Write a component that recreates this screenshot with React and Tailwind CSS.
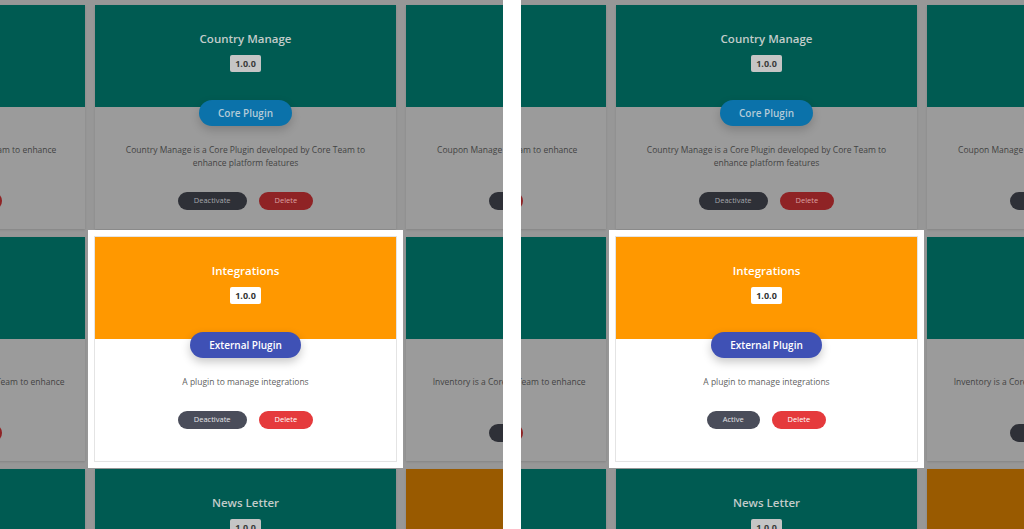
import React from 'react';

// plugin rows as laid out in the admin grid (3 columns, first and last cut by the viewport)
const ROWS = [
    [
        { name: 'Location Manage', type: 'core', desc: 'Location is a Core Plugin developed by Core Team to enhance platform features' },
        { name: 'Country Manage', type: 'core', desc: 'Country Manage is a Core Plugin developed by Core Team to enhance platform features' },
        { name: 'Coupon Manage', type: 'core', desc: 'Coupon Manage is a Core Plugin developed by Core Team to enhance platform features' },
    ],
    [
        { name: 'Notifications', type: 'core', desc: 'Notifications is a Core Plugin developed by Core Team to enhance platform features' },
        { name: 'Integrations', type: 'external', desc: 'A plugin to manage integrations', focus: true },
        { name: 'Inventory', type: 'core', desc: 'Inventory is a Core Plugin developed by Core Team to enhance platform features' },
    ],
    [
        { name: 'Order Manage', type: 'core', desc: 'Order Manage is a Core Plugin developed by Core Team to enhance platform features' },
        { name: 'News Letter', type: 'core', desc: 'News Letter is a Core Plugin developed by Core Team to enhance platform features' },
        { name: 'Payments', type: 'external', desc: 'A plugin to manage payments' },
    ],
];

function PluginCard({ plugin, activeLabel }) {
    const lit = !!plugin.focus;
    const external = plugin.type === 'external';

    const header = external
        ? (lit ? 'bg-[#ff9800]' : 'bg-[#995a00]')
        : (lit ? 'bg-[#009688]' : 'bg-[#005b52]');

    return (
        <article
            className={`flex flex-col ${lit
                ? 'relative z-10 bg-white shadow-[0_0_0_1px_#e4e4e4,0_0_0_7px_#ffffff]'
                : 'bg-[#9b9b9b] shadow-[0_1px_2px_rgba(0,0,0,0.12)]'}`}
        >
            <div className={`h-[102px] shrink-0 flex flex-col items-center pt-[26px] ${header}`}>
                <h3 className={`text-[11.5px] leading-[15px] font-semibold ${lit ? 'text-white' : 'text-[#c3ccca]'}`}>
                    {plugin.name}
                </h3>
                <span className={`mt-[9px] h-[17px] px-[5px] rounded-[2px] flex items-center text-[9px] font-bold ${lit ? 'bg-white text-[#333]' : 'bg-[#c5c5c5] text-[#3a3a3a]'}`}>
                    1.0.0
                </span>
            </div>

            <div className="flex flex-col items-center px-[14px] pb-[19px] flex-1">
                <span
                    className={`-mt-[7px] h-[26px] rounded-full flex items-center px-[19px] text-[10px] font-semibold ${external
                        ? (lit ? 'bg-[#3f51b5] text-white shadow-[0_4px_10px_rgba(0,0,0,0.22)]' : 'bg-[#26316d] text-[#9aa0c4]')
                        : (lit ? 'bg-[#03a9f4] text-white' : 'bg-[#0b72aa] text-[#b3cbd8] shadow-[0_4px_10px_rgba(0,0,0,0.18)]')}`}
                >
                    {external ? 'External Plugin' : 'Core Plugin'}
                </span>

                <p className={`mt-[17px] text-center text-[8.5px] leading-[13px] ${lit ? 'text-[#5f5f5f]' : 'text-[#434343]'}`}>
                    {plugin.desc}
                </p>

                <div className="mt-[23px] flex gap-[12px]">
                    <button className={`h-[18px] px-[16px] rounded-full text-[7.5px] ${lit ? 'bg-[#4a4d5a] text-[#e4e4e8]' : 'bg-[#2e3037] text-[#a4a6ab]'}`}>
                        {lit && activeLabel ? activeLabel : 'Deactivate'}
                    </button>
                    <button className={`h-[18px] px-[16px] rounded-full text-[7.5px] ${lit ? 'bg-[#e53a3c] text-white' : 'bg-[#8f2325] text-[#dca0a0]'}`}>
                        Delete
                    </button>
                </div>
            </div>
        </article>
    );
}

function Panel({ activeLabel, box }) {
    return (
        <div className="relative w-[503px] h-full shrink-0 overflow-hidden bg-[#979797]">
            <div className="ml-[-216px] w-[923px] pt-[5px] grid grid-cols-[301px_301px_301px] gap-x-[10px] gap-y-[8px]">
                {ROWS.flat().map(p => (
                    <PluginCard key={p.name} plugin={p} activeLabel={activeLabel} />
                ))}
            </div>
            {/* callout around the toggle button */}
            <div className={`absolute border-[1.5px] border-[#f4583a] ${box}`} />
        </div>
    );
}

export default function App() {
    return (
        <div className="w-[1024px] h-[529px] flex gap-[18px] bg-white overflow-hidden font-['Open_Sans',sans-serif]">
            <Panel box="left-[172px] top-[396px] w-[81px] h-[54px]" />
            <Panel activeLabel="Active" box="left-[172px] top-[393px] w-[79px] h-[59px]" />
        </div>
    );
}
